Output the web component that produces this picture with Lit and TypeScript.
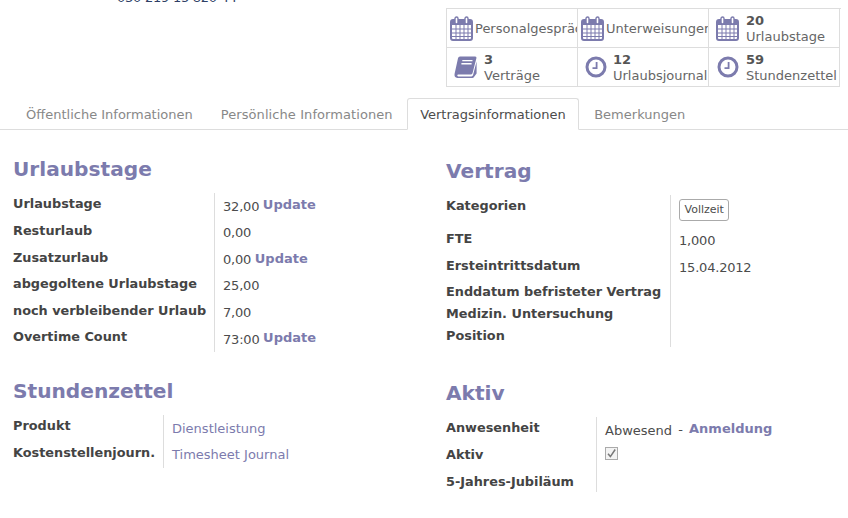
import { LitElement, html, css, svg } from "lit";
import { customElement } from "lit/decorators.js";

const calendar = html`<svg class="ico" width="23" height="25" viewBox="0 0 23 25">
  <rect x="1" y="4" width="21" height="20" rx="2" fill="none" stroke="#7C7BAD" stroke-width="2"/>
  <rect x="1" y="4" width="21" height="5" fill="#7C7BAD"/>
  ${[5.5, 9.5, 13.5, 17.5].map((x) => svg`<rect x="${x}" y="9" width="1" height="14" fill="#7C7BAD"/>`)}
  ${[12.5, 16.5, 20].map((y) => svg`<rect x="2" y="${y}" width="19" height="1" fill="#7C7BAD"/>`)}
  <rect x="5" y="1" width="3" height="7" rx="1.5" fill="#fff" stroke="#7C7BAD" stroke-width="1.4"/>
  <rect x="15" y="1" width="3" height="7" rx="1.5" fill="#fff" stroke="#7C7BAD" stroke-width="1.4"/>
</svg>`;

const clock = html`<svg class="ico" width="22" height="22" viewBox="0 0 22 22">
  <circle cx="11" cy="11" r="9" fill="none" stroke="#7C7BAD" stroke-width="3"/>
  <path d="M11.6 6v6.2H7.5" fill="none" stroke="#7C7BAD" stroke-width="1.8"/>
</svg>`;

const book = html`<svg class="ico" width="23" height="22" viewBox="0 0 23 22">
  <path d="M6 0.5H21a1.4 1.4 0 0 1 1.4 1.8L18.5 17.2A2 2 0 0 1 16.6 18.6H4.2C3 18.6 3 20.4 4.2 20.4H17.4A2 2 0 0 0 19 19.2L22.6 5.5V17.6L20 21a2 2 0 0 1 -1.6 .9H3.4C1.2 21.9 0 20 0.6 17.8L4 2.2A2.2 2.2 0 0 1 6 0.5Z" fill="#7C7BAD"/>
  <path d="M8.3 4.6H18.5M7.4 7.8H17.6" stroke="#fff" stroke-width="1.4" fill="none"/>
</svg>`;

const check = html`<svg width="11" height="11" viewBox="0 0 11 11"><path d="M2 5.8 4.4 8.6 9.2 1.5" fill="none" stroke="#777" stroke-width="1.5"/></svg>`;

@customElement("app-root")
export class AppRoot extends LitElement {
  static styles = css`
    :host { display: block; width: 848px; height: 518px; overflow: hidden; background: #fff;
      font-family: "DejaVu Sans", sans-serif; font-size: 13px; color: #4c4c4c; }
    .head { display: flex; height: 98px; padding-top: 8px; box-sizing: border-box; }
    .phone { width: 446px; padding-left: 117px; box-sizing: border-box; margin-top: -19px; height: 18px; line-height: 18px; color: #2f3f66; white-space: nowrap; letter-spacing: -0.25px; }
    .box { display: grid; grid-template-columns: repeat(3, 131px); grid-auto-rows: 39px; width: 395px;
      border-top: 1px solid #ddd; border-left: 1px solid #ddd; height: 79px; box-sizing: border-box; }
    .cell { display: flex; align-items: center; border-right: 1px solid #ddd; border-bottom: 1px solid #ddd; overflow: hidden; color: #666; line-height: 16px; min-width: 0; }
    .slot { flex: none; width: 37px; display: flex; justify-content: center; }
    .slot.small { width: 28px; }
    .slot.tight { width: 35px; }
    .cell b { display: block; color: #555; }
    .cell span { white-space: nowrap; padding-top: 1px; }
    .ico { display: block; }
    .tabs { display: flex; padding-left: 12px; border-bottom: 1px solid #ddd; box-sizing: border-box; height: 32px; align-items: stretch; }
    .tab { padding: 0 13px; display: flex; align-items: center; color: #888; border: 1px solid transparent; margin-bottom: -1px; }
    .tab.wide { letter-spacing: 0.08px; }
    .tab.on { color: #4c4c4c; background: #fff; border-color: #ddd; border-bottom-color: #fff; border-radius: 3px 3px 0 0; padding: 0 12.5px; letter-spacing: -0.02px; margin-right: 1px; }
    .sheet { display: grid; grid-template-columns: 433px 402px; padding: 0 0 0 13px; }
    .col { display: flex; flex-direction: column; padding-top: 26px; }
    .col.right { padding-top: 28px; }
    h2 { margin: 0; font-size: 20.15px; line-height: 26px; font-weight: bold; color: #7C7BAD; }
    .fields { display: grid; justify-content: start; margin-top: 11px; }
    .lab { font-weight: bold; font-size: 12.85px; color: #444; line-height: 20px; height: 27px; padding: 1px 7px 0 0; box-sizing: border-box; border-right: 1px solid #ddd; white-space: nowrap; }
    .lab.b { height: 26px; }
    .lab.s { height: 22px; }
    .lab.t { height: 21px; }
    .lab.k { height: 33px; }
    .val { padding: 3px 0 0 8px; line-height: 20px; min-width: 0; white-space: nowrap; }
    .val.push { padding-top: 4px; }
    .num { letter-spacing: -0.2px; }
    a { color: #7C7BAD; text-decoration: none; }
    a.up { font-weight: bold; vertical-align: 2px; line-height: 14px; margin-left: -0.5px; letter-spacing: 0; }
    a.up.low { vertical-align: 1px; }
    a.up.wide { margin-left: 0; }
    .tag { display: inline-block; font-size: 11px; line-height: 20px; height: 20px; padding: 0 4.5px; border: 1px solid #aaa; border-radius: 3px; margin-top: 1px; }
    .chk { width: 11px; height: 11px; border: 1px solid #aaa; background: #f3f3f3; display: flex; }
    .g2 { margin-top: 26px; }
    .right .g2 { margin-top: 33px; }
    .dash { margin: 0 2px; vertical-align: 1px; line-height: 14px; }
  `;

  private row(label: string, value: unknown, cls = "", valCls = "") {
    return html`<div class="lab ${cls}">${label}</div><div class="val ${valCls}">${value}</div>`;
  }

  private amount(v: string, low = false) {
    return html`<span class="num">${v}</span> <a class="up ${low ? "low" : ""}">Update</a>`;
  }

  private num(v: string) {
    return html`<span class="num">${v}</span>`;
  }

  render() {
    return html`
      <div class="head">
        <div class="phone">030 219 15 820 44</div>
        <div class="box">
          <div class="cell"><div class="slot small">${calendar}</div><span>Personalgespräche</span></div>
          <div class="cell"><div class="slot small">${calendar}</div><span>Unterweisungen</span></div>
          <div class="cell"><div class="slot">${calendar}</div><span><b>20</b>Urlaubstage</span></div>
          <div class="cell"><div class="slot">${book}</div><span><b>3</b>Verträge</span></div>
          <div class="cell"><div class="slot tight">${clock}</div><span><b>12</b>Urlaubsjournal</span></div>
          <div class="cell"><div class="slot">${clock}</div><span><b>59</b>Stundenzettel</span></div>
        </div>
      </div>
      <div class="tabs">
        <div class="tab">Öffentliche Informationen</div>
        <div class="tab wide">Persönliche Informationen</div>
        <div class="tab on">Vertragsinformationen</div>
        <div class="tab">Bemerkungen</div>
      </div>
      <div class="sheet">
        <div class="col">
          <h2>Urlaubstage</h2>
          <div class="fields" style="grid-template-columns: 202px auto">
            ${this.row("Urlaubstage", this.amount("32,00"), "", "push")}
            ${this.row("Resturlaub", this.num("0,00"))}
            ${this.row("Zusatzurlaub", this.amount("0,00", true), "b")}
            ${this.row("abgegoltene Urlaubstage", this.num("25,00"))}
            ${this.row("noch verbleibender Urlaub", this.num("7,00"), "b")}
            ${this.row("Overtime Count", this.amount("73:00"), "b", "push")}
          </div>
          <div class="g2">
            <h2>Stundenzettel</h2>
            <div class="fields" style="grid-template-columns: 151px auto">
              ${this.row("Produkt", html`<a>Dienstleistung</a>`, "", "push")}
              ${this.row("Kostenstellenjourn.", html`<a>Timesheet Journal</a>`, "b")}
            </div>
          </div>
        </div>
        <div class="col right">
          <h2>Vertrag</h2>
          <div class="fields" style="grid-template-columns: 225px auto">
            ${this.row("Kategorien", html`<span class="tag">Vollzeit</span>`, "k")}
            ${this.row("FTE", this.num("1,000"))}
            ${this.row("Ersteintrittsdatum", this.num("15.04.2012"), "b")}
            ${this.row("Enddatum befristeter Vertrag", "", "s")}
            ${this.row("Medizin. Untersuchung", "", "s")}
            ${this.row("Position", "", "s")}
          </div>
          <div class="g2">
            <h2>Aktiv</h2>
            <div class="fields" style="grid-template-columns: 151px auto">
              ${this.row("Anwesenheit", html`Abwesend <span class="dash">-</span> <a class="up wide">Anmeldung</a>`, "", "push")}
              ${this.row("Aktiv", html`<div class="chk">${check}</div>`)}
              ${this.row("5-Jahres-Jubiläum", "", "t")}
            </div>
          </div>
        </div>
      </div>
    `;
  }
}
